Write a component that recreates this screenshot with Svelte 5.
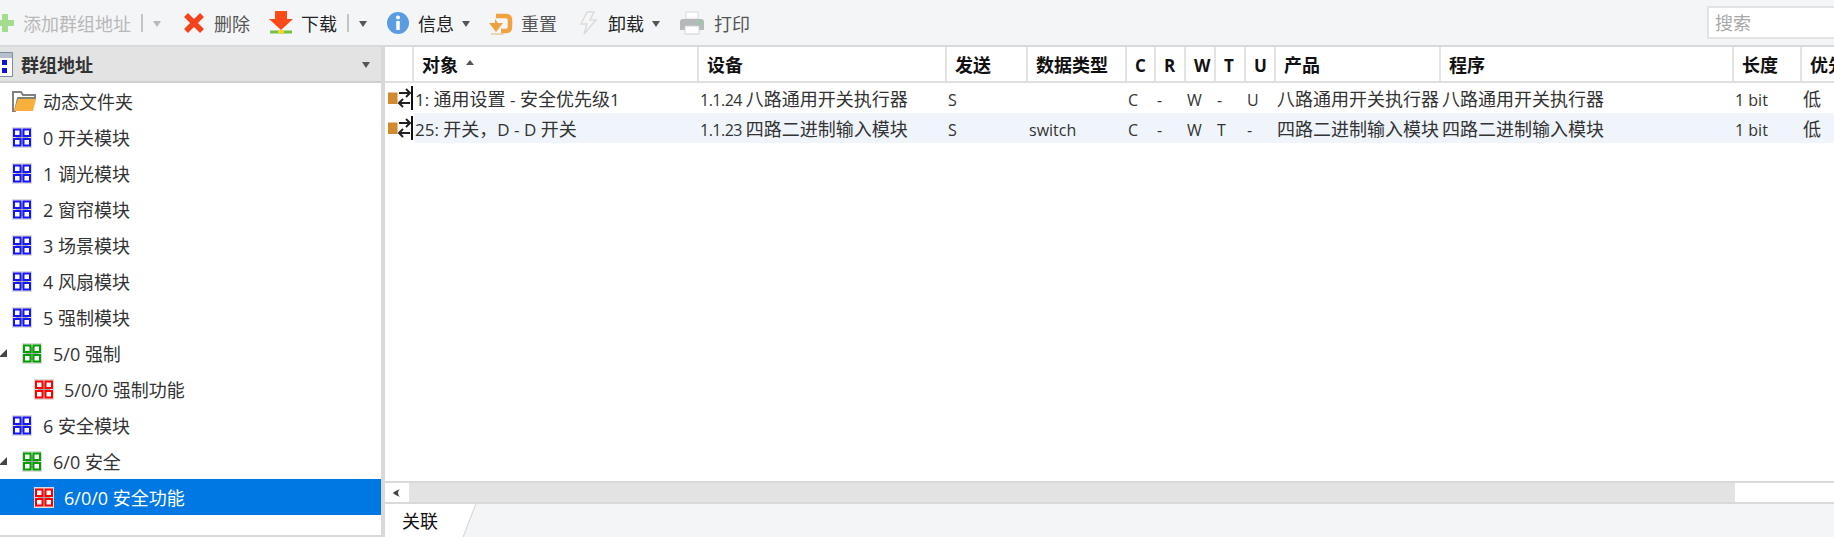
<script>
	const tools = [
		{ icon: 'plus', label: '添加群组地址', off: true, split: true, caret: true },
		{ icon: 'del', label: '删除', dim: true },
		{ icon: 'down', label: '下载', split: true, caret: true },
		{ icon: 'info', label: '信息', caret: true },
		{ icon: 'reset', label: '重置', dim: true },
		{ icon: 'flash', label: '卸载', caret: true },
		{ icon: 'print', label: '打印', dim: true }
	];

	const tree = [
		{ kind: 'folder', label: '动态文件夹', level: 0 },
		{ kind: 'blue', label: '0 开关模块', level: 0 },
		{ kind: 'blue', label: '1 调光模块', level: 0 },
		{ kind: 'blue', label: '2 窗帘模块', level: 0 },
		{ kind: 'blue', label: '3 场景模块', level: 0 },
		{ kind: 'blue', label: '4 风扇模块', level: 0 },
		{ kind: 'blue', label: '5 强制模块', level: 0 },
		{ kind: 'green', label: '5/0 强制', level: 1, open: true },
		{ kind: 'red', label: '5/0/0 强制功能', level: 2 },
		{ kind: 'blue', label: '6 安全模块', level: 0 },
		{ kind: 'green', label: '6/0 安全', level: 1, open: true },
		{ kind: 'red', label: '6/0/0 安全功能', level: 2, selected: true }
	];

	const columns = ['', '对象', '设备', '发送', '数据类型', 'C', 'R', 'W', 'T', 'U', '产品', '程序', '长度', '优先级'];

	const rows = [
		['1: 通用设置 - 安全优先级1', '1.1.24 八路通用开关执行器', 'S', '', 'C', '-', 'W', '-', 'U', '八路通用开关执行器', '八路通用开关执行器', '1 bit', '低'],
		['25: 开关，D - D 开关', '1.1.23 四路二进制输入模块', 'S', 'switch', 'C', '-', 'W', 'T', '-', '四路二进制输入模块', '四路二进制输入模块', '1 bit', '低']
	];

	// latin runs are set smaller than the CJK ones
	const runs = (text) => text.match(/[\x00-\x7f]+|[^\x00-\x7f]+/g) ?? [];
	const isLatin = (run) => run.charCodeAt(0) < 128;
</script>

{#snippet mixed(text)}
	<span class="mixed">{#each runs(text) as run}<span class:lat={isLatin(run)}>{run}</span>{/each}</span>
{/snippet}

{#snippet gaIcon(kind)}
	<svg class="ga {kind}" width="20" height="21" viewBox="0 0 20 21">
		<rect width="20" height="21" fill="#dcdcdc" />
		<path d="M10 4v13M4 10.500h12" stroke="#a8a8a8" stroke-width="4" />
		<rect class="cell" x="2" y="2.500" width="6.500" height="6.500" />
		<rect class="cell" x="11.500" y="2.500" width="6.500" height="6.500" />
		<rect class="cell" x="2" y="12" width="6.500" height="6.500" />
		<rect class="cell" x="11.500" y="12" width="6.500" height="6.500" />
	</svg>
{/snippet}

{#snippet toolIcon(name)}
	<svg width="24" height="24" viewBox="0 0 24 24">
		{#if name === 'plus'}
			<path d="M15 3v18M6 12h18" stroke="#a5dc8f" stroke-width="6" transform="translate(-1 0)" />
		{:else if name === 'del'}
			<path d="M4 3l16 16M20 3L4 19" stroke="#f4431c" stroke-width="5.500" transform="translate(0 1)" />
		{:else if name === 'down'}
			<path d="M6 0h12v8h6L12 19 0 8h6z" fill="#fb4a18" />
			<path d="M1 21h22" stroke="#76c043" stroke-width="3" />
			<path d="M9 19h6v3.500H9z" fill="#f2d52e" />
		{:else if name === 'info'}
			<circle cx="12" cy="12" r="11" fill="#5a9ce2" />
			<circle cx="12" cy="6.500" r="2" fill="#fff" />
			<path d="M12 10v9" stroke="#fff" stroke-width="3.500" />
		{:else if name === 'reset'}
			<path d="M7 5h10c3 0 4 2 4 4v7c0 3-2 4-4 4h-5" fill="none" stroke="#f0a23e" stroke-width="4.500" />
			<path d="M0 12h6V8l3 4h5l-7 9z" fill="#f0a23e" />
			<path d="M2 23h13" stroke="#e8c9a0" stroke-width="1.500" />
		{:else if name === 'flash'}
			<path d="M11 1h7l-4 8h6L8 23l3-10H5z" fill="#f6f6f6" stroke="#dcdcdc" stroke-width="1.500" />
		{:else if name === 'print'}
			<path d="M6 1h12v7H6z" fill="#fff" stroke="#d8d8d8" />
			<path d="M3 8h18q3 0 3 3v8H0v-8q0-3 3-3z" fill="#b4b9bc" />
			<path d="M5 15h14v8H5z" fill="#fff" stroke="#d0d0d0" />
			<circle cx="20" cy="11" r="1.500" fill="#7fdc7f" />
		{/if}
	</svg>
{/snippet}

<div class="app">
	<header class="toolbar">
		{#each tools as t}
			<div class="tool {t.icon}" class:off={t.off} class:dim={t.dim}>
				{@render toolIcon(t.icon)}
				<span class="tool-label">{t.label}</span>
				{#if t.split}<span class="split"></span>{/if}
				{#if t.caret}<span class="caret"></span>{/if}
			</div>
		{/each}
		<div class="search">搜索</div>
	</header>

	<main class="body">
		<aside class="side">
			<div class="side-head">
				<svg class="win" width="14" height="25" viewBox="0 0 14 25">
					<path d="M-2 .5h14.500v24H-2z" fill="#fff" stroke="#7f8da3" />
					<path d="M-2 1h14v5H-2z" fill="#b6bfcc" />
					<path d="M2 8h5v5H2zM2 16h5v5H2z" fill="#1212e0" />
				</svg>
				<span class="side-title">群组地址</span>
				<span class="caret"></span>
			</div>
			<div class="tree">
				{#each tree as n}
					<div class="node lv{n.level}" class:selected={n.selected} class:is-folder={n.kind === 'folder'}>
						{#if n.open}
							<svg class="twisty" width="8" height="8" viewBox="0 0 8 8"><path d="M8 0v8H0z" fill="#444" /></svg>
						{/if}
						{#if n.kind === 'folder'}
							<svg width="24" height="21" viewBox="0 0 24 21">
								<path d="M1 20V1h8l2 3h12v3H6L3 20z" fill="#fff" stroke="#808080" stroke-width="2" />
								<path d="M6 8h18l-3 12H2z" fill="#fbb03b" />
							</svg>
						{:else}
							{@render gaIcon(n.kind)}
						{/if}
						{@render mixed(n.label)}
					</div>
				{/each}
			</div>
		</aside>

		<section class="main">
			<div class="table">
				<div class="thead tr">
					{#each columns as c, i}
						<div class="th">
							{@render mixed(c)}
							{#if i === 1}<span class="sort"></span>{/if}
						</div>
					{/each}
				</div>
				{#each rows as row}
					<div class="tr row">
						<div class="td icon-cell">
							<svg width="26" height="24" viewBox="0 0 26 24">
								<rect x="0" y="6.500" width="9.500" height="11.500" fill="#d28a30" />
								<path d="M11 7h11M18 3l4 4-4 4M22 17H11M15 13l-4 4 4 4" fill="none" stroke="#222" stroke-width="2" />
								<path d="M24 0v24" stroke="#111" stroke-width="2" />
							</svg>
						</div>
						{#each row as cell}
							<div class="td">{@render mixed(cell)}</div>
						{/each}
					</div>
				{/each}
			</div>

			<div class="hscroll">
				<div class="arrow">
					<svg width="10" height="10" viewBox="0 0 10 10"><path d="M8 1C5 2 2 4 1 5c1 1 4 3 7 4C6.500 7.500 6 6 6 5s.5-2.500 2-4z" fill="#444" /></svg>
				</div>
				<div class="track"></div>
				<div class="rest"></div>
			</div>

			<div class="tabs">
				<div class="tab">关联</div>
			</div>
		</section>
	</main>
</div>

<style>
	:global(body) {
		margin: 0;
		background: #fff;
	}

	.app {
		width: 1834px;
		height: 537px;
		display: flex;
		flex-direction: column;
		overflow: hidden;
		font-family: 'Noto Sans CJK SC', 'Open Sans', sans-serif;
		font-size: 18px;
		color: #333;
	}

	.mixed {
		white-space: pre;
	}

	.lat {
		font-family: 'Open Sans', sans-serif;
		font-size: 16px;
	}

	.th .lat {
		font-size: 17px;
	}

	.node .lat {
		font-size: 18px;
	}

	.td:nth-child(2) .lat {
		font-size: 17px;
	}

	.td:nth-child(3) .lat {
		letter-spacing: -0.5px;
	}

	/* toolbar */
	.toolbar {
		height: 45px;
		flex-shrink: 0;
		display: flex;
		align-items: center;
		gap: 19px;
		background: #f4f5f7;
		border-bottom: 2px solid #d9d9d9;
	}

	.tool {
		display: flex;
		align-items: center;
		gap: 8px;
		color: #222;
		line-height: 1;
	}

	.tool svg {
		flex-shrink: 0;
	}

	.tool.plus {
		margin-left: -9px;
		margin-right: 2px;
	}

	.tool.print {
		margin-left: 1px;
		gap: 10px;
	}

	.tool.off {
		color: #b8b8b8;
	}

	.tool.dim {
		color: #555;
	}

	.split {
		width: 2px;
		height: 18px;
		background: #c4c4c4;
		margin: 0 2px;
	}

	.caret {
		width: 0;
		height: 0;
		border-left: 4.500px solid transparent;
		border-right: 4.500px solid transparent;
		border-top: 6px solid #555;
		margin-top: 2px;
	}

	.tool.off .caret {
		border-top-color: #b8b8b8;
	}

	.search {
		margin-left: auto;
		width: 127px;
		height: 33px;
		line-height: 29px;
		flex-shrink: 0;
		box-sizing: border-box;
		border: 2px solid #e3e3e3;
		border-right: none;
		background: #fff;
		color: #a8a8a8;
		padding-left: 6px;
	}

	/* layout */
	.body {
		flex: 1;
		display: flex;
		min-height: 0;
	}

	.side {
		width: 381px;
		flex-shrink: 0;
		display: flex;
		flex-direction: column;
		border-right: 4px solid #d9d9d9;
		border-bottom: 2px solid #d9d9d9;
		height: 488px;
	}

	.side-head {
		height: 34px;
		display: flex;
		align-items: center;
		background: #e3e3e3;
		border-bottom: 2px solid #d0d0d0;
		padding-right: 11px;
		flex-shrink: 0;
	}

	.win {
		flex-shrink: 0;
	}

	.side-title {
		margin-left: 7px;
		font-weight: 700;
		flex: 1;
	}

	.tree {
		display: flex;
		flex-direction: column;
	}

	.node {
		height: 36px;
		display: flex;
		align-items: center;
		gap: 11px;
		padding-left: 12px;
		white-space: nowrap;
		position: relative;
	}

	.node svg {
		flex-shrink: 0;
	}

	.node.is-folder {
		gap: 7px;
	}

	.node.lv1 {
		padding-left: 22px;
		gap: 11px;
	}

	.node.lv2 {
		padding-left: 34px;
		gap: 10px;
	}

	.node.selected {
		background: #0078e3;
		color: #fff;
	}

	.twisty {
		position: absolute;
		left: -1px;
		top: 14px;
	}

	.ga .cell {
		fill: #fff;
		stroke-width: 2;
	}

	.ga.blue .cell {
		stroke: #1414ff;
	}

	.ga.green .cell {
		stroke: #00a000;
	}

	.ga.red .cell {
		stroke: #ff0000;
	}

	.main {
		flex: 1;
		min-width: 0;
		display: flex;
		flex-direction: column;
	}

	/* table */
	.table {
		flex: 1;
		min-height: 0;
		overflow: hidden;
	}

	.tr {
		display: grid;
		grid-template-columns: 29px 285px 248px 81px 99px 29px 30px 30px 30px 30px 165px 293px 68px 32px;
	}

	.thead {
		height: 36px;
		box-sizing: border-box;
		border-bottom: 2px solid #e0e0e0;
	}

	.th {
		display: flex;
		align-items: center;
		box-sizing: border-box;
		padding-left: 8px;
		font-weight: 700;
		color: #111;
		border-right: 2px solid #e3e3e3;
		white-space: nowrap;
		overflow: hidden;
	}

	.th:last-child {
		border-right: none;
	}

	.sort {
		width: 0;
		height: 0;
		margin: -4px 0 0 8px;
		border-left: 4.500px solid transparent;
		border-right: 4.500px solid transparent;
		border-bottom: 5px solid #555;
	}

	.row {
		height: 30px;
	}

	.row:nth-child(odd) {
		background: #f0f5fb;
	}

	.td {
		display: flex;
		align-items: center;
		padding-left: 1px;
		white-space: nowrap;
		overflow: hidden;
	}

	.icon-cell {
		padding-left: 3px;
		background: #fff;
	}

	.icon-cell svg {
		flex-shrink: 0;
	}

	/* scrollbar */
	.hscroll {
		height: 19px;
		flex-shrink: 0;
		display: flex;
		border-top: 2px solid #d9d9d9;
		border-bottom: 2px solid #d9d9d9;
	}

	.arrow {
		width: 24px;
		display: flex;
		align-items: center;
		justify-content: center;
		background: #fff;
	}

	.track {
		width: 1326px;
		background: #e3e3e3;
	}

	.rest {
		flex: 1;
		background: #fff;
	}

	/* tabs */
	.tabs {
		height: 33px;
		flex-shrink: 0;
		background: #f4f5f7;
	}

	.tab {
		width: 61px;
		height: 33px;
		line-height: 33px;
		padding-left: 17px;
		background: #fff;
		color: #111;
		position: relative;
	}

	.tab::after {
		content: '';
		position: absolute;
		top: 0;
		right: -7px;
		width: 14px;
		height: 100%;
		background: #fff;
		border-right: 1px solid #d0d0d0;
		transform: skewX(-21deg);
	}
</style>
